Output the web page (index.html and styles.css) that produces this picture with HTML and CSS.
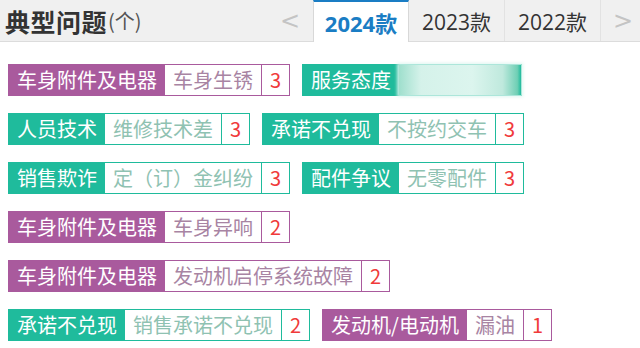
FILE: index.html
```html
<!DOCTYPE html>
<html lang="zh-CN">
<head>
    <meta charset="UTF-8">
    <meta name="viewport" content="width=device-width, initial-scale=1.0">
    <title>典型问题</title>
    <link rel="stylesheet" href="styles.css">
</head>
<body>
    <div class="header">
        <h2 class="title">典型问题<span class="unit">(个)</span></h2>

        <div class="year-tabs">
            <span class="arrow">&lt;</span>
            <span class="tab active">2024款</span>
            <span class="tab">2023款</span>
            <span class="tab">2022款</span>
            <span class="arrow arrow-next">&gt;</span>
        </div>
    </div>

    <div class="tag-list">
        <div class="tag purple">
            <span class="tag-name">车身附件及电器</span>
            <span class="tag-value">车身生锈</span>
            <span class="tag-count">3</span>
        </div>
        <div class="tag green">
            <span class="tag-name">服务态度</span>
            <span class="tag-blur"></span>
        </div>
        <div class="tag green">
            <span class="tag-name">人员技术</span>
            <span class="tag-value">维修技术差</span>
            <span class="tag-count">3</span>
        </div>
        <div class="tag green">
            <span class="tag-name">承诺不兑现</span>
            <span class="tag-value">不按约交车</span>
            <span class="tag-count">3</span>
        </div>
        <div class="tag green">
            <span class="tag-name">销售欺诈</span>
            <span class="tag-value">定（订）金纠纷</span>
            <span class="tag-count">3</span>
        </div>
        <div class="tag green">
            <span class="tag-name">配件争议</span>
            <span class="tag-value">无零配件</span>
            <span class="tag-count">3</span>
        </div>
        <div class="tag purple">
            <span class="tag-name">车身附件及电器</span>
            <span class="tag-value">车身异响</span>
            <span class="tag-count">2</span>
        </div>
        <div class="tag purple">
            <span class="tag-name">车身附件及电器</span>
            <span class="tag-value">发动机启停系统故障</span>
            <span class="tag-count">2</span>
        </div>
        <div class="tag green">
            <span class="tag-name">承诺不兑现</span>
            <span class="tag-value">销售承诺不兑现</span>
            <span class="tag-count">2</span>
        </div>
        <div class="tag purple">
            <span class="tag-name">发动机/电动机</span>
            <span class="tag-value">漏油</span>
            <span class="tag-count">1</span>
        </div>
    </div>
</body>
</html>
```

FILE: styles.css
```css
* {
    margin: 0;
    padding: 0;
    box-sizing: border-box;
}

body {
    font-family: "Noto Sans CJK SC", "Microsoft YaHei", sans-serif;
    background: white;
    width: 640px;
    overflow: hidden;
}

.header {
    display: flex;
    align-items: stretch;
    height: 42px;
    background: #f0f0f0;
    border-bottom: 1px solid #dcdcdc;
}

.title {
    display: flex;
    align-items: center;
    padding-left: 5px;
    font-size: 25px;
    font-weight: bold;
    color: #333;
    letter-spacing: 0.5px;
}

.title .unit {
    font-size: 20px;
    font-weight: normal;
    color: #555;
    letter-spacing: 0;
    margin-left: 1px;
}

.year-tabs {
    display: flex;
    margin-left: auto;
    font-family: "Open Sans", "Noto Sans CJK SC", sans-serif;
}

.arrow {
    width: 36px;
    margin-right: 5px;
    display: flex;
    align-items: center;
    justify-content: center;
    font-family: "DejaVu Sans", sans-serif;
    font-size: 24px;
    color: #c4c4c4;
}

.arrow-next {
    width: 39px;
    margin-right: 0;
    padding-left: 5px;
}

.tab {
    width: 96px;
    display: flex;
    align-items: center;
    justify-content: center;
    font-size: 21px;
    color: #333;
    border-right: 1px solid #e2e2e2;
}

.tab.active {
    background: white;
    color: #1a7dc4;
    font-weight: bold;
    font-size: 22px;
    border-top: 2px solid #1a7dc4;
    border-left: 1px solid #d8d8d8;
    border-right: 1px solid #d8d8d8;
    margin-bottom: -1px;
}

.tag-list {
    display: flex;
    flex-wrap: wrap;
    gap: 17px 12px;
    padding: 22px 8px 0;
}

.tag {
    display: flex;
    height: 32px;
    border: 1px solid;
    font-size: 20px;
    line-height: 30px;
    background: white;
}

.tag span {
    padding: 0 8px;
    white-space: nowrap;
}

.tag-name {
    color: white;
}

.tag-count {
    color: #f03a3a;
    border-left: 1px solid;
}

.purple {
    border-color: #a95a9d;
}

.purple .tag-name {
    background: #a95a9d;
}

.purple .tag-value {
    color: #a884a3;
}

.purple .tag-count {
    border-color: #a95a9d;
}

.green {
    border-color: #1fbb9c;
}

.green .tag-name {
    background: #1fbb9c;
}

.green .tag-value {
    color: #8fc2b2;
}

.green .tag-count {
    border-color: #1fbb9c;
}

.tag span.tag-blur {
    width: 122px;
    padding: 0;
    background: linear-gradient(90deg, #9fdfcd 0%, #d5f2ea 18%, #dcf5ee 60%, #bfe9dd 85%, #6fcfb5 97%, #1fbb9c 100%);
    box-shadow: 0 0 3px 2px rgba(220, 245, 238, 0.9);
}
```
